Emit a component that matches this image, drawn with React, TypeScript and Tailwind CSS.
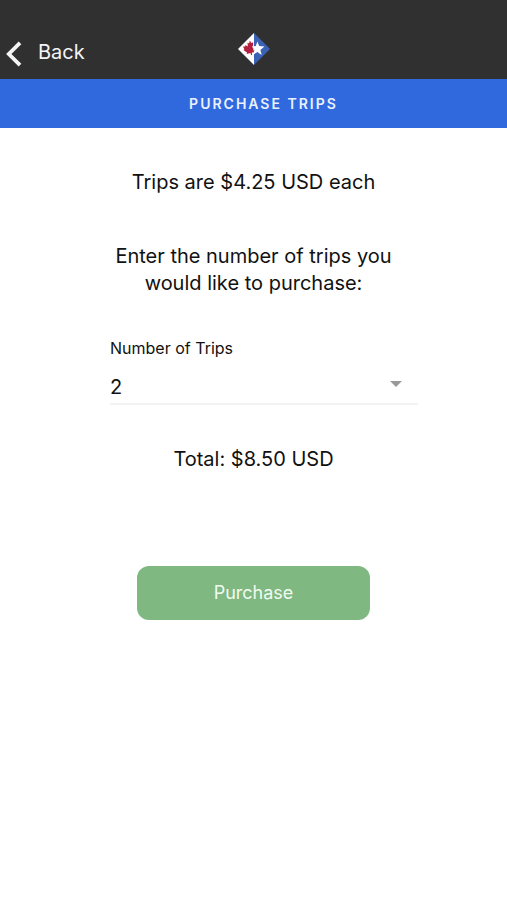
import React, { useState } from 'react';

const TRIP_PRICE = 4.25;
const TRIP_OPTIONS = [1, 2, 3, 4, 5, 6, 7, 8, 9, 10];

const formatUsd = (amount: number) => `$${amount.toFixed(2)} USD`;

const BackChevron = () => (
    <svg viewBox="0 0 16 26" className="w-4 h-[26px]" fill="none" stroke="currentColor" strokeWidth="3.8" aria-hidden="true">
        <path d="M14 1.8 2.8 13 14 24.2" />
    </svg>
);

// Diamond split in two: maple leaf on white, star on blue
const Logo = () => (
    <svg viewBox="0 0 32 32" className="w-8 h-8" role="img" aria-label="Logo">
        <path d="M16 0 0 16l16 16z" fill="#ffffff" />
        <path d="M16 0l16 16-16 16z" fill="#3a62b5" />
        <path
            d="M11.8 7.4l1.6 2.6 1.8-.8-.2 4 1.2 1.3-.9 1.7 1.1 3.2-2.6.2.3 2.6-1-.1-.7-2.2-3.6 1 .2-1.5-3.6-2.3 1-.9-1.4-2.8 2.2.1.3-1.5 2.3 1.5-.3-4 1.6.9z"
            fill="#b3203f"
        />
        <path d="M19.4 8.4l1.8 4.7 5.2.4-4 3.4 1.3 5-4.4-2.8-4.2 2.7 1.3-5-2.6-3.2 4-.5z" fill="#ffffff" />
    </svg>
);

const Header = () => (
    <header className="bg-[#303030] text-white grid grid-cols-3 items-center pt-5 pb-px">
        <button type="button" className="flex items-center gap-4 pl-1.5 pt-2.5 h-[58px] text-xl text-gray-100">
            <BackChevron />
            <span className="pb-1">Back</span>
        </button>
        <div className="flex justify-center">
            <Logo />
        </div>
    </header>
);

const App = () => {
    const [trips, setTrips] = useState(2);

    return (
        <div className="min-h-screen bg-white text-[#111111] font-['Inter','Liberation_Sans',sans-serif]">
            <Header />
            <h1 className="bg-[#3069de] text-[#eaf1ff] text-sm font-semibold tracking-[2px] text-center uppercase leading-[49px] pl-5">
                Purchase Trips
            </h1>

            <main className="flex flex-col items-center text-center text-xl leading-[27px] pt-[41px]">
                <p>Trips are {formatUsd(TRIP_PRICE)} each</p>
                <p className="mt-[47px] max-w-[288px]">Enter the number of trips you would like to purchase:</p>

                <div className="w-full pl-[21.7%] pr-[17.6%] mt-[39px] text-left">
                    <label htmlFor="trips" className="block text-base leading-6">Number of Trips</label>
                    <div className="relative mt-[11px] border-b-2 border-[#f3f3f3]">
                        <select
                            id="trips"
                            value={trips}
                            onChange={(e) => setTrips(Number(e.target.value))}
                            className="block w-full h-8 appearance-none bg-transparent outline-none text-xl"
                        >
                            {TRIP_OPTIONS.map((n) => (
                                <option key={n} value={n}>{n}</option>
                            ))}
                        </select>
                        <svg viewBox="0 0 12 6" className="absolute right-4 top-2.5 w-3 h-1.5 pointer-events-none" aria-hidden="true">
                            <path d="M0 0h12L6 6z" fill="#999999" />
                        </svg>
                    </div>
                </div>

                <p className="mt-[41px]">Total: {formatUsd(trips * TRIP_PRICE)}</p>

                <button type="button" className="mt-[93px] w-[46%] h-[54px] rounded-xl bg-[#7fb880] text-[#f1fbf1] text-lg">
                    Purchase
                </button>
            </main>
        </div>
    );
};

export default App;
